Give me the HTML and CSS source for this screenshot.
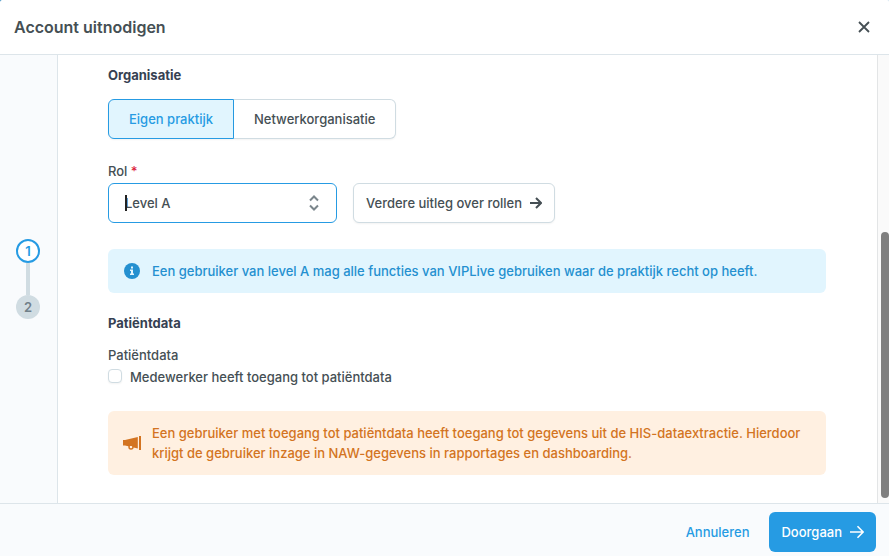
FILE: index.html
```html
<!DOCTYPE html>
<html lang="nl">

<head>
  <meta charset="UTF-8" />
  <meta name="viewport" content="width=device-width, initial-scale=1.0" />
  <title>Account uitnodigen</title>
  <link rel="stylesheet" href="styles.css">
</head>

<body>
  <div class="modal">
    <header class="modal-header">
      <h1>Account uitnodigen</h1>
      <button class="close" type="button" aria-label="Sluiten">
        <svg width="12" height="12" viewBox="0 0 12 12" fill="none" stroke="currentColor" stroke-width="1.8">
          <path d="M1 1l10 10M11 1L1 11" />
        </svg>
      </button>
    </header>

    <div class="modal-body">
      <!-- Steps -->
      <nav class="sidebar">
        <ol class="steps">
          <li class="step active">1</li>
          <li class="step">2</li>
        </ol>
      </nav>

      <!-- Form -->
      <main class="content">
        <h2>Organisatie</h2>
        <div class="segments">
          <button class="segment selected" type="button">Eigen praktijk</button>
          <button class="segment" type="button">Netwerkorganisatie</button>
        </div>

        <label class="label" for="role">Rol <span class="required">*</span></label>
        <div class="role-row">
          <div class="select-box">
            <select id="role">
              <option>Level A</option>
            </select>
            <span class="caret"></span>
            <svg class="chevrons" width="10" height="16" viewBox="0 0 10 16" fill="none" stroke="currentColor" stroke-width="2">
              <path d="M1 5.5l4-4 4 4M1 10.5l4 4 4-4" />
            </svg>
          </div>
          <button class="btn btn-outline" type="button">
            Verdere uitleg over rollen
            <svg width="12" height="12" viewBox="0 0 12 12" fill="none" stroke="currentColor" stroke-width="2">
              <path d="M0 6h11M6 1l5 5-5 5" />
            </svg>
          </button>
        </div>

        <div class="alert info">
          <svg class="alert-icon" width="16" height="16" viewBox="0 0 16 16">
            <circle cx="8" cy="8" r="8" fill="currentColor" />
            <path d="M7 3.5h2v2H7zM6 6.5h3v4h1V12H6v-1.5h1V8H6z" fill="#e1f5fe" />
          </svg>
          <p>Een gebruiker van level A mag alle functies van VIPLive gebruiken waar de praktijk recht op heeft.</p>
        </div>

        <h2>Patiëntdata</h2>
        <fieldset class="field">
          <legend>Patiëntdata</legend>
          <label class="check">
            <input type="checkbox">
            Medewerker heeft toegang tot patiëntdata
          </label>
        </fieldset>

        <div class="alert warning">
          <svg class="alert-icon" width="18" height="16" viewBox="0 0 18 16" fill="currentColor">
            <path d="M16 1h2v14h-2zM0 5h2l12.8-3v11.5L2 10.500H0z" />
            <circle cx="8" cy="12" r="2" fill="#fff0e1" stroke="currentColor" stroke-width="1.4" />
            <path d="M4 8h8v3.500L4 10.500z" />
          </svg>
          <p>Een gebruiker met toegang tot patiëntdata heeft toegang tot gegevens uit de HIS-dataextractie. Hierdoor krijgt de gebruiker inzage in NAW-gegevens in rapportages en dashboarding.</p>
        </div>
      </main>

      <div class="scrollbar">
        <div class="thumb"></div>
      </div>
    </div>

    <footer class="modal-footer">
      <button class="btn btn-link" type="button">Annuleren</button>
      <button class="btn btn-primary" type="button">
        Doorgaan
        <svg width="14" height="14" viewBox="0 0 14 14" fill="none" stroke="currentColor" stroke-width="1.6">
          <path d="M0 7h13M7.500 1.300L13.200 7l-5.700 5.700" />
        </svg>
      </button>
    </footer>
  </div>
</body>

</html>
```
FILE: styles.css
```css
* {
  box-sizing: border-box;
  margin: 0;
  padding: 0;
}

body {
  background: linear-gradient(to right, #1f7fb8, #cfe3ef);
  color: #454f54;
  font-family: Inter, sans-serif;
  font-size: 13px;
  font-weight: 500;
  line-height: 20px;
}

button,
select {
  font: inherit;
  color: inherit;
  cursor: pointer;
}

.modal {
  display: flex;
  flex-direction: column;
  height: 100vh;
  border-radius: 2px 2px 0 0;
  background-color: white;
  overflow: hidden;
}

/* Header */
.modal-header {
  display: flex;
  align-items: center;
  justify-content: space-between;
  padding: 17px 19px 17px 14px;
  border-bottom: 1px solid #dde5ea;
}

h1 {
  font-size: 16px;
  font-weight: 600;
  line-height: 20px;
}

.close {
  display: flex;
  border: none;
  background: none;
}

/* Body */
.modal-body {
  display: flex;
  flex: 1;
  min-height: 0;
}

.sidebar {
  display: flex;
  align-items: center;
  width: 58px;
  padding-left: 16px;
  border-right: 1px solid #dde5ea;
  background-color: #f9fbfd;
}

.steps {
  display: flex;
  flex-direction: column;
  align-items: center;
  list-style: none;
}

.step {
  width: 24px;
  height: 24px;
  border-radius: 50%;
  background-color: #d0dce2;
  color: #71808a;
  font-weight: 600;
  line-height: 24px;
  text-align: center;
}

.step.active {
  border: 2px solid #269be3;
  background-color: white;
  color: #269be3;
  line-height: 20px;
}

.step + .step {
  margin-top: 32px;
  position: relative;
}

.step + .step::before {
  content: "";
  position: absolute;
  bottom: 100%;
  left: 10px;
  width: 4px;
  height: 32px;
  background-color: #d0dce2;
}

.content {
  flex: 1;
  padding: 10px 51px 0 50px;
  overflow: hidden;
}

h2 {
  color: #364152;
  font-size: 13px;
  font-weight: 700;
}

.segments {
  display: flex;
  margin: 14px 0 22px;
}

.segment {
  height: 40px;
  padding: 0 20px;
  border: 1px solid #d0dce2;
  border-left: none;
  border-radius: 0 6px 6px 0;
  background-color: white;
  box-shadow: 0 1px 2px rgba(0, 0, 0, 0.05);
}

.segment.selected {
  border: 1px solid #269be3;
  border-radius: 6px 0 0 6px;
  background-color: #e1f5fe;
  color: #269be3;
}

.label {
  display: block;
  margin-bottom: 2px;
}

.required {
  color: #dc1f3e;
}

.role-row {
  display: flex;
  gap: 16px;
}

.select-box {
  position: relative;
  width: 229px;
}

.select-box select {
  appearance: none;
  width: 100%;
  height: 40px;
  padding: 0 16px;
  border: 1px solid #269be3;
  border-radius: 6px;
  background-color: white;
}

.caret {
  position: absolute;
  top: 12px;
  left: 17px;
  width: 2px;
  height: 16px;
  background-color: #222;
}

.chevrons {
  position: absolute;
  top: 12px;
  right: 18px;
  color: #7b868c;
  pointer-events: none;
}

/* Buttons */
.btn {
  display: flex;
  align-items: center;
  gap: 8px;
  height: 40px;
  padding: 0 12px;
  border: none;
  border-radius: 6px;
}

.btn-outline {
  border: 1px solid #d0dce2;
  background-color: white;
  box-shadow: 0 1px 2px rgba(0, 0, 0, 0.05);
}

.btn-link {
  background: none;
  color: #269be3;
}

.btn-primary {
  background-color: #269be3;
  color: white;
}

/* Alerts */
.alert {
  display: flex;
  align-items: center;
  gap: 12px;
  padding: 12px 16px;
  border-radius: 6px;
}

.alert-icon {
  flex: none;
}

.alert.info {
  margin: 26px 0 20px;
  background-color: #e1f5fe;
  color: #2490d0;
}

.alert.warning {
  margin-top: 24px;
  gap: 11px;
  padding-left: 15px;
  background-color: #fff0e1;
  color: #d37421;
}

.field {
  margin-top: 12px;
  border: none;
}

.check {
  display: flex;
  gap: 8px;
  margin-top: 2px;
}

.check input {
  appearance: none;
  width: 14px;
  height: 14px;
  margin-top: 2px;
  border: 1px solid #d0dce2;
  border-radius: 4px;
  background-color: white;
  box-shadow: 0 1px 2px rgba(0, 0, 0, 0.05);
}

/* Scrollbar */
.scrollbar {
  display: flex;
  flex-direction: column;
  justify-content: flex-end;
  width: 12px;
  padding: 0 0 5px 3px;
  border-left: 1px solid #e3e5e6;
  background-color: #fafafa;
}

.thumb {
  height: 60%;
  border-radius: 4px;
  background-color: #7f7f7f;
}

/* Footer */
.modal-footer {
  display: flex;
  justify-content: flex-end;
  gap: 8px;
  padding: 8px 13px 4px;
  border-top: 1px solid #dde5ea;
  background-color: #f9fbfd;
}
```
